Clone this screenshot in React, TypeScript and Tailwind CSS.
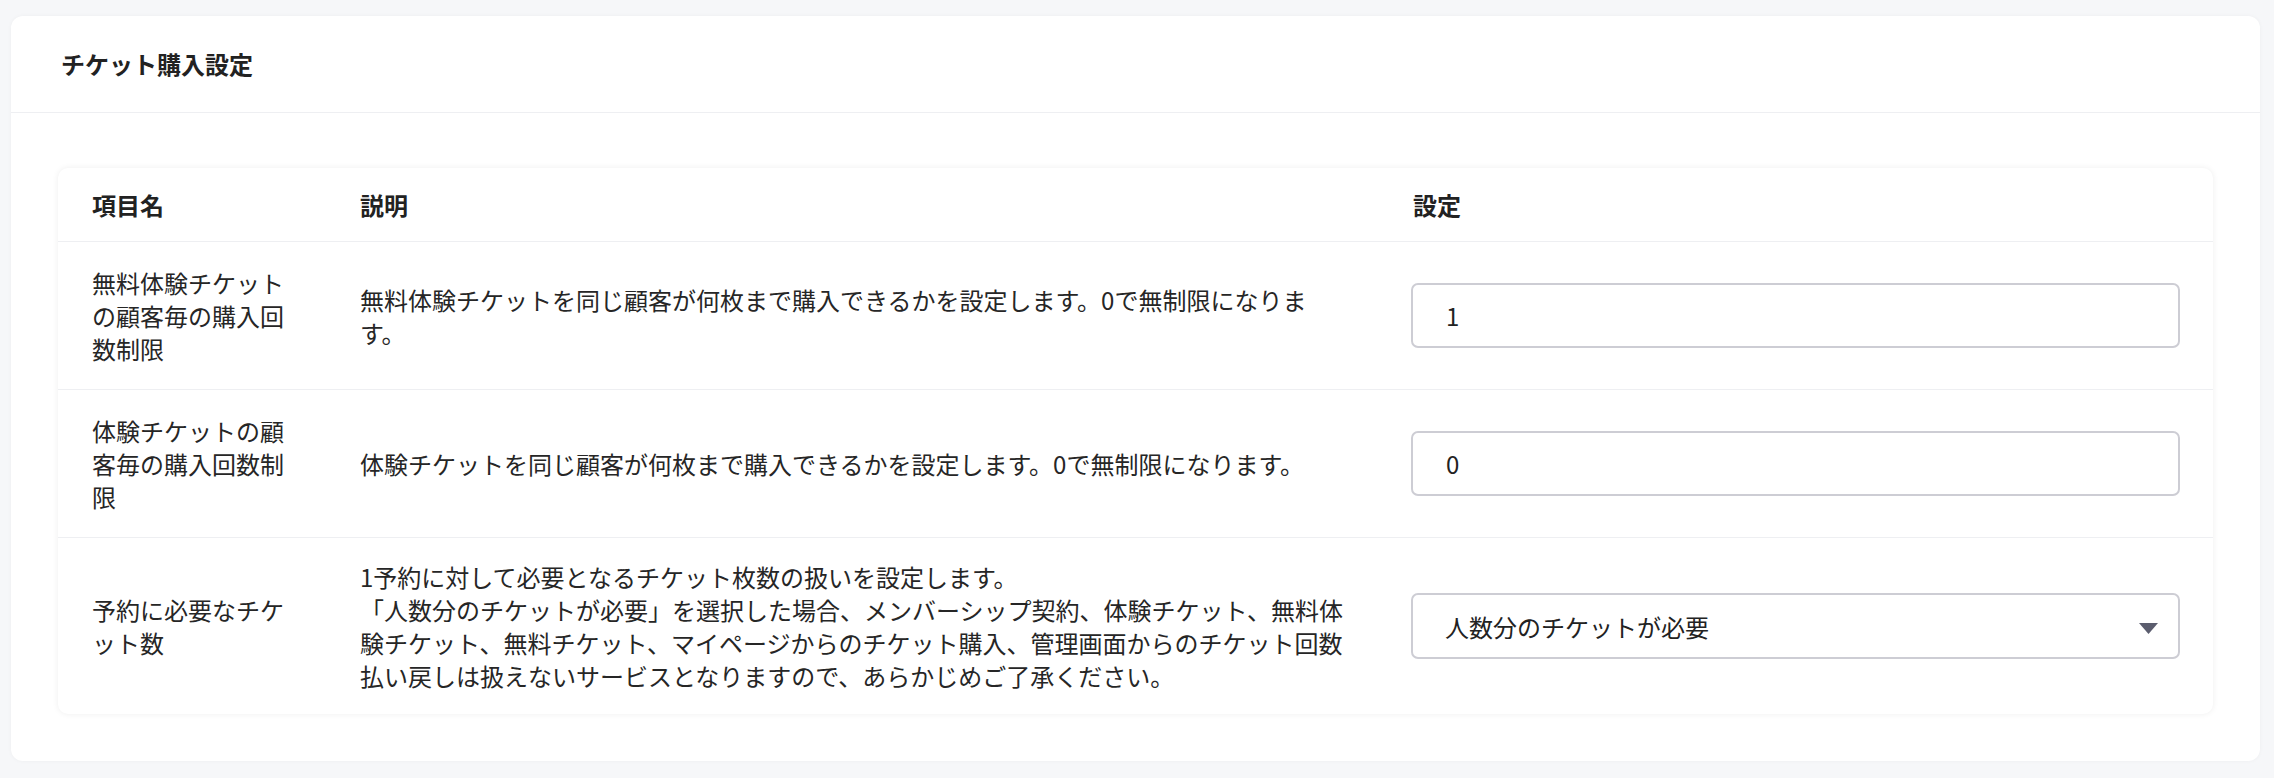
const rows = [
  {
    label: '無料体験チケットの顧客毎の購入回数制限',
    desc: ['無料体験チケットを同じ顧客が何枚まで購入できるかを設定します。0で無制限になります。'],
    value: '1',
  },
  {
    label: '体験チケットの顧客毎の購入回数制限',
    desc: ['体験チケットを同じ顧客が何枚まで購入できるかを設定します。0で無制限になります。'],
    value: '0',
  },
]

const App = () => {
  return (
    <div
      lang="ja"
      className="bg-[#f6f7f9] w-full min-h-screen pl-[11px] pr-[14px] pt-4 pb-[19px] text-[#262626] font-['Noto_Sans_CJK_JP',sans-serif]"
    >
      <div className="bg-white rounded-xl shadow-[0_0_4px_rgba(0,0,0,0.04)]">
        {/* ヘッダー */}
        <div className="h-[97px] flex items-center pl-[50px] border-b border-[#eeeff2]">
          <div className="text-[24px] font-bold text-[#222]">チケット購入設定</div>
        </div>

        <div className="px-[47px] pt-[55px] pb-[47px]">
          <div className="rounded-[10px] bg-white shadow-[0_0_6px_rgba(0,0,0,0.07)] text-[24px] leading-[33px]">
            {/* 見出し行 */}
            <div className="grid grid-cols-[268px_1053px_1fr] h-[74px] items-center font-bold text-[#222] border-b border-[#eeeff2]">
              <div className="pl-[34px]">項目名</div>
              <div className="pl-[34px]">説明</div>
              <div className="pl-[34px]">設定</div>
            </div>

            {rows.map((r) => (
              <div key={r.label} className="grid grid-cols-[268px_1053px_1fr] items-center py-[24px] border-b border-[#eeeff2]">
                <div className="pl-[34px] pr-[34px]">{r.label}</div>
                <div className="pl-[34px] pr-[29px]">{r.desc}</div>
                <div className="pl-[32px] pr-[33px]">
                  <input
                    defaultValue={r.value}
                    className="w-full h-[65px] border-2 border-[#cdcdd4] rounded-[7px] pl-[33px] text-[24px] text-[#222] outline-none"
                  />
                </div>
              </div>
            ))}

            {/* 予約に必要なチケット数 */}
            <div className="grid grid-cols-[268px_1053px_1fr] items-center py-[22px]">
              <div className="pl-[34px] pr-[34px]">予約に必要なチケット数</div>
              <div className="pl-[34px] pr-[29px]">
                1予約に対して必要となるチケット枚数の扱いを設定します。
                <br />
                「人数分のチケットが必要」を選択した場合、メンバーシップ契約、体験チケット、無料体験チケット、無料チケット、マイページからのチケット購入、管理画面からのチケット回数払い戻しは扱えないサービスとなりますので、あらかじめご了承ください。
              </div>
              <div className="pl-[32px] pr-[33px]">
                <div className="relative">
                  <select className="w-full h-[66px] appearance-none bg-white border-2 border-[#cdcdd4] rounded-[7px] pl-[32px] text-[24px] text-[#222] outline-none">
                    <option>人数分のチケットが必要</option>
                    <option>1予約につき1枚</option>
                  </select>
                  <svg
                    className="absolute right-[22px] top-[30px] pointer-events-none"
                    width="19"
                    height="11"
                    viewBox="0 0 19 11"
                  >
                    <path d="M0 0h19L9.5 11z" fill="#5b5d6e" />
                  </svg>
                </div>
              </div>
            </div>
          </div>
        </div>
      </div>
    </div>
  )
}

export default App
